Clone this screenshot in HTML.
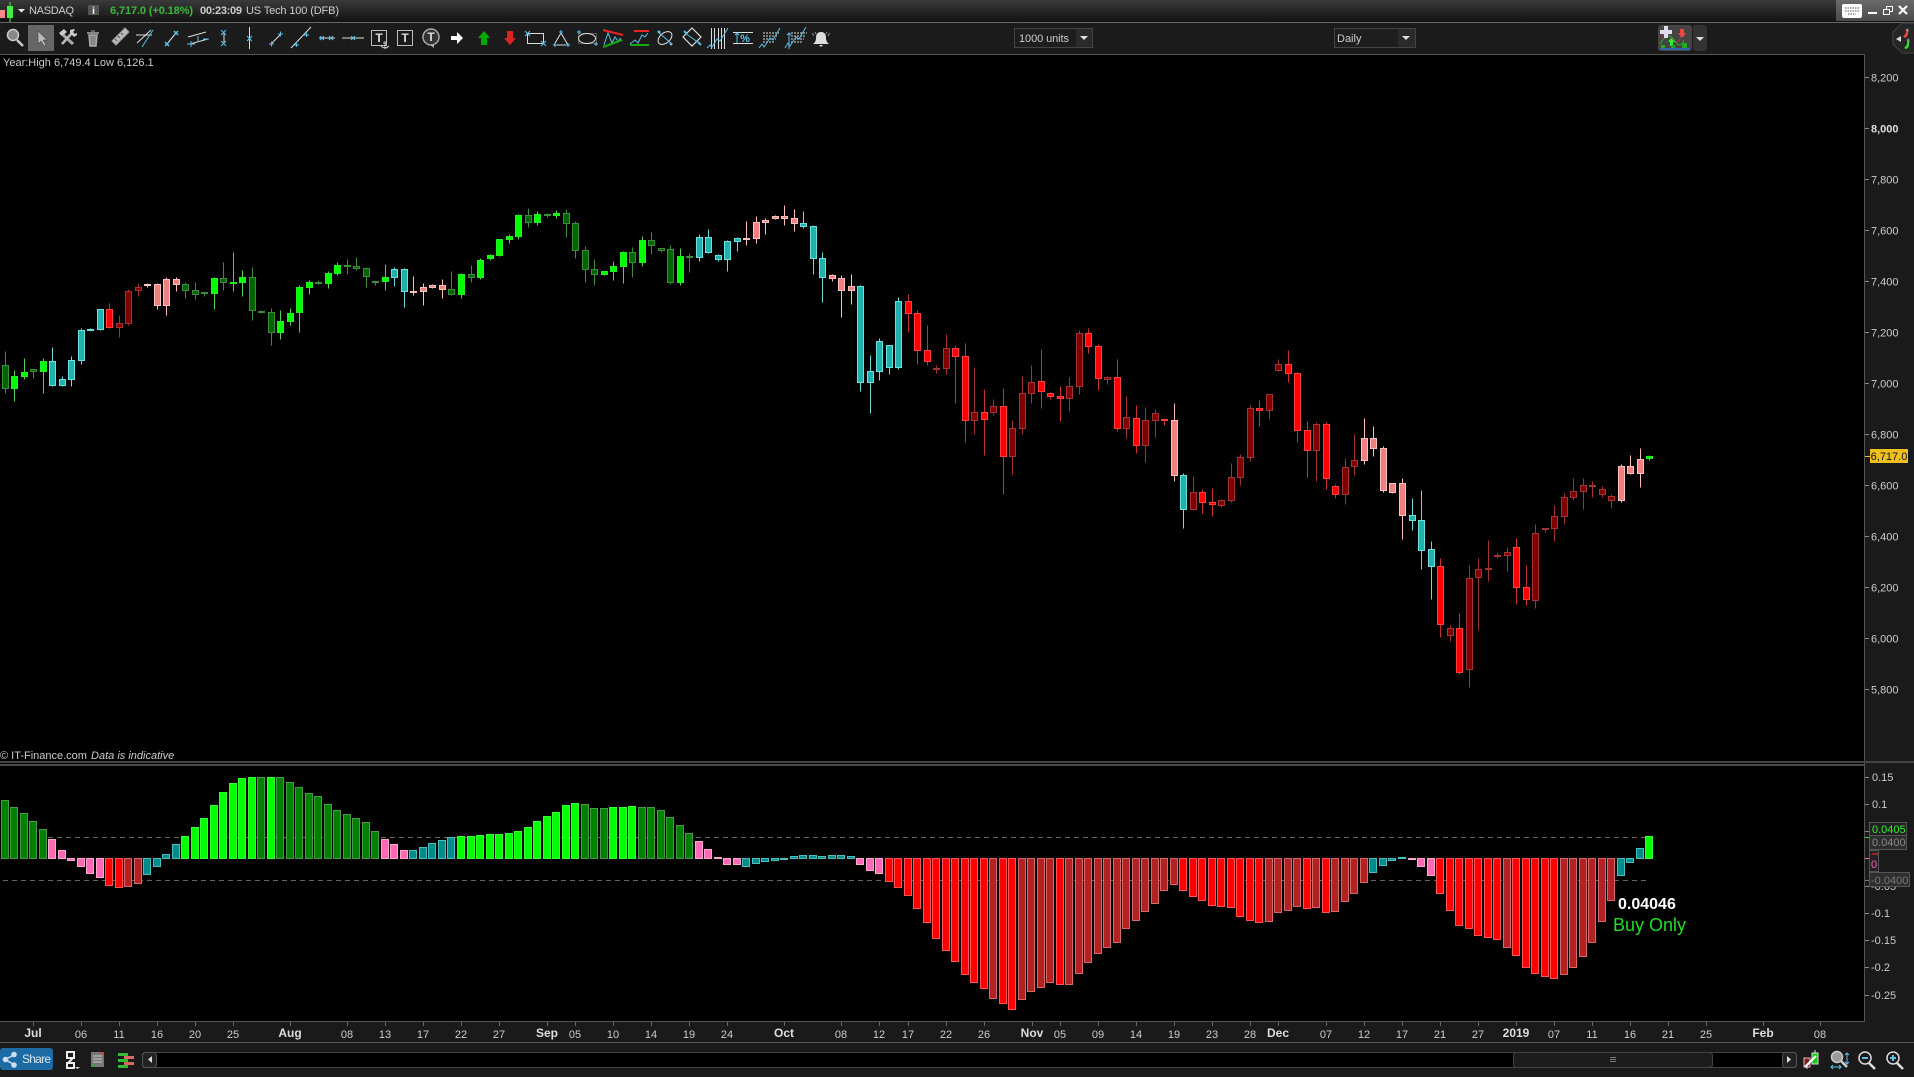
<!DOCTYPE html>
<html><head><meta charset="utf-8"><title>NASDAQ</title>
<style>
html,body{margin:0;padding:0;background:#1a1a1a;width:1914px;height:1077px;overflow:hidden}
svg{display:block;font-family:"Liberation Sans",Arial,sans-serif;font-size:11px}
.a{fill:#ccc}
.m{fill:#ddd;font-weight:bold;font-size:12px;text-anchor:middle}
.d{fill:#ccc;text-anchor:middle}
.w{fill:none;stroke-width:1}
.n{fill:none}
</style></head><body>
<svg width="1914" height="1077" viewBox="0 0 1914 1077" xmlns="http://www.w3.org/2000/svg">
<defs>
<linearGradient id="t" x1="0" y1="0" x2="0" y2="1"><stop offset="0" stop-color="#3a3a3a"/><stop offset="1" stop-color="#121212"/></linearGradient>
<linearGradient id="tr" x1="0" y1="0" x2="0" y2="1"><stop offset="0" stop-color="#6a6a6a"/><stop offset="1" stop-color="#4a4a4a"/></linearGradient>
</defs>
<!-- title bar -->
<rect width="1914" height="22" fill="url(#t)"/>
<rect y="22" width="1914" height="1" fill="#666"/>
<rect y="23" width="1914" height="31" fill="#1b1b1b"/>
<rect y="54" width="1865" height="1" fill="#555"/>
<!-- chart -->
<rect y="55" width="1864" height="966" fill="#000"/>
<rect x="1864" y="54" width="1" height="967" fill="#555"/>
<rect y="1021" width="1865" height="1" fill="#555"/>
<rect y="761" width="1914" height="2" fill="#444"/>
<rect y="764" width="1865" height="2" fill="#4a4a4a"/>

<!-- title left -->
<path d="M0 10h5v8H0z" fill="#f88"/><path d="M7 6h6v12H7z" fill="#4e4"/><path d="M10 2v20" stroke="#4e4"/>
<path d="M18 9h7l-3.500 3.500z" fill="#eee"/>
<text x="29" y="14" class="a" textLength="45">NASDAQ</text>
<rect x="88" y="5" width="11" height="10" fill="#555"/><text x="93.500" y="14" fill="#fff" font-weight="bold" font-size="10" text-anchor="middle">i</text>
<text x="110" y="14" fill="#3cb83c" font-weight="bold" textLength="83">6,717.0 (+0.18%)</text>
<text x="200" y="14" fill="#ccc" font-weight="bold" textLength="42">00:23:09</text>
<text x="246" y="14" class="a" textLength="93">US Tech 100 (DFB)</text>

<!-- top right -->
<rect x="1836" y="0" width="78" height="21" fill="url(#tr)"/>
<rect x="1842" y="4" width="20" height="14" rx="2" fill="#fff"/>
<path d="M1845 8h14M1845 11h14M1848 14h8" stroke="#555" stroke-dasharray="1.500 1"/>
<path d="M1868 13h9" stroke="#fff" stroke-width="2"/>
<path d="M1883.500 9.500h6v5h-6zM1886.500 9V6.500h6v5H1890" stroke="#fff" fill="none"/>
<path d="M1899 6l8 8M1907 6l-8 8" stroke="#fff" stroke-width="2.200"/>

<!-- toolbar icons -->
<g fill="none" stroke="#5bc0e8">
<circle cx="13" cy="35" r="5.500" fill="#888" stroke="#ccc" stroke-width="1.500"/><path d="M17 40l6 6" stroke="#ccc" stroke-width="2.500"/>
<rect x="28" y="25" width="26" height="26" fill="#666" stroke="none"/>
<path d="M38 31v13l3-3 3 5 2-1-3-5h4z" fill="#bbb" stroke="#333" stroke-width=".5"/>
<path d="M61 33l12 11" stroke="#aaa" stroke-width="3"/><path d="M72 33L62 44" stroke="#bbb" stroke-width="2.500"/>
<path d="M59 33l5-4 3 3-5 4zM70 30l4-1 1 1-2 2 2 2 2-1 0 2-3 2-4-4z" fill="#ccc" stroke="none"/>
<path d="M87 33h12M89 35h8l-1 11h-6z" stroke="#aaa" fill="#888" stroke-width="1.500"/><path d="M91 31h4" stroke="#aaa"/>
<path d="M112 41l13-13 4 4-13 13z" fill="#bbb" stroke="#999"/><path d="M115 39l2 2M118 36l2 2M121 33l2 2" stroke="#555"/>
<path d="M137 43l14-13M136 35h16" stroke="#ddd"/><path d="M142 47l11-17"/>
<path d="M167 44l9-11" stroke="#ddd"/><path d="M165 42l4 4M169 42l-4 4M174 31l4 4M178 31l-4 4" stroke-width="1.500"/>
<path d="M188 37l18-5M190 44l18-5" stroke="#ddd"/><path d="M187 44h8M191 41v6M198 36v6M203 39h6"/>
<path d="M224 32v12" stroke="#ddd"/><path d="M221 30l5 5M226 30l-5 5M221 41l5 5M226 41l-5 5"/>
<path d="M249.500 27v22" stroke="#ddd"/><path d="M247 36l5 5M252 36l-5 5"/>
<path d="M271 44l10-10" stroke="#ddd"/><path d="M269 44h5M271.500 41.500v5M278 34h5M280.500 31.500v5"/>
<path d="M291 48l20-21" stroke="#ddd"/><path d="M294 45h5M296.500 42v5M304 35h5M306.500 32v5"/>
<path d="M319 38h16" stroke="#ddd"/><path d="M320 36l4 4M324 36l-4 4M329 36l4 4M333 36l-4 4"/>
<path d="M342 38h22" stroke="#ddd"/><path d="M351 36l4 4M355 36l-4 4"/>
</g>
<rect x="371.500" y="30.500" width="15" height="15" fill="none" stroke="#bbb"/>
<text x="379" y="42" fill="#ddd" font-weight="bold" font-size="12" text-anchor="middle">T</text>
<path d="M385 41v8M381 46q4 4 8 0M383 43h4" stroke="#ccc" fill="none"/>
<rect x="397.500" y="30.500" width="15" height="15" fill="none" stroke="#bbb"/>
<text x="405" y="42" fill="#ddd" font-weight="bold" font-size="12" text-anchor="middle">T</text>
<circle cx="431" cy="37" r="8" fill="#333" stroke="#aaa" stroke-width="1.500"/><path d="M430 45l4 3v-3" fill="#aaa"/>
<text x="431" y="41" fill="#ddd" font-weight="bold" font-size="12" text-anchor="middle">T</text>
<path d="M451 36h6v-4l6 6-6 6v-4h-6z" fill="#fff"/>
<path d="M484 31l6 7h-3v7h-6v-7h-3z" fill="#0a0"/>
<path d="M507 31h6v7h3l-6 7-6-7h3z" fill="#d22"/>
<g fill="none" stroke="#5bc0e8">
<rect x="527.500" y="33.500" width="16" height="10" stroke="#ddd"/><path d="M525 31l5 5M530 31l-5 5M541 41l5 5M546 41l-5 5"/>
<path d="M561 33l7 12h-14z" stroke="#ddd"/><path d="M559 32h4M561 30v4M553 45h4M555 43v4M566 45h4M568 43v4"/>
<rect x="578.500" y="33.500" width="18" height="10" stroke="#555"/><ellipse cx="587" cy="38.500" rx="8.500" ry="5" stroke="#ddd"/><path d="M577 32h4M579 30v4M594 44h4M596 42v4"/>
<path d="M604 45l4-12 4 10 3-6 3 4 3-3"/><path d="M603 30l20 5" stroke="#e22" stroke-width="2"/><path d="M603 47l19-7" stroke="#1a1" stroke-width="2"/>
<path d="M630 44l5-4 3 3 4-8 3 2 3-4"/><path d="M634 31h15" stroke="#e22" stroke-width="2"/><path d="M630 45h19" stroke="#1a1" stroke-width="2"/>
<ellipse cx="665" cy="38" rx="9" ry="5" stroke="#ddd" transform="rotate(-45 665 38)" opacity="0"/>
<ellipse cx="665" cy="38" rx="8" ry="5" stroke="#ddd" transform="rotate(-40 665 38)"/><path d="M658 32l14 12"/><path d="M658 31l2 2M670 43l2 2" stroke-width="2.500"/>
<path d="M683 37l9-9 9 9-9 9z" stroke="#ddd" stroke-width="1.200"/><path d="M685 33l14 10"/><path d="M684 31l3 3M698 42l3 3" stroke-width="2"/>
<path d="M711.500 28v21M714.500 28v21M718.500 28v21M721.500 28v21M724.500 28v21" stroke="#ddd"/><path d="M707 48l3-3 2 2 5-8 3 2 8-13"/>
<path d="M733 32.500h20M733 43.500h20" stroke="#ddd"/><path d="M737 33v10M735 35l2-2 2 2"/><text x="745" y="42" fill="#5bc0e8" stroke="none" font-size="11" font-weight="bold" text-anchor="middle">%</text>
<path d="M763 33h16M763 36h14M763 39h13M763 42h11" stroke="#ddd" stroke-dasharray="2 1"/><path d="M759 48l3-4 2 3 6-9 3 2 7-12"/>
<path d="M791 33h16M791 36h14M791 39h13M791 42h11" stroke="#ddd" stroke-dasharray="2 1"/><path d="M785 48l3-5 2 3 6-9 3 2 7-12M789 33v16M787 35l2-2 2 2"/>
</g>
<path d="M821 32q5 0 5 6 0 4 3 6h-16q3-2 3-6 0-6 5-6zM819 45h4l-2 2z" fill="#ddd"/>
<path d="M812 33l2 3M830 33l-2 3M815 32l1 2M827 32l-1 2" stroke="#888" fill="none"/>

<!-- dropdowns -->
<rect x="1014.500" y="28.500" width="78" height="19" fill="#1e1e1e" stroke="#444"/>
<text x="1019" y="42" class="a" textLength="50">1000 units</text>
<rect x="1076" y="29" width="16" height="18" fill="#2a2a2a"/><path d="M1080 36h8l-4 4z" fill="#ddd"/>
<rect x="1334.500" y="28.500" width="81" height="19" fill="#1e1e1e" stroke="#444"/>
<text x="1337" y="42" class="a">Daily</text>
<rect x="1398" y="29" width="17" height="18" fill="#2a2a2a"/><path d="M1402 36h8l-4 4z" fill="#ddd"/>

<!-- trade button -->
<rect x="1658" y="25" width="34" height="26" rx="3" fill="#444"/>
<rect x="1693" y="25" width="14" height="26" rx="3" fill="#333"/>
<path d="M1696 37h8l-4 4z" fill="#ddd"/>
<path d="M1660 38q6-8 12 0t8 0" stroke="#a33" fill="none"/>
<path d="M1660 44q8-14 14-4t10 0" stroke="#3a3" fill="none"/>
<path d="M1662 33h4v-4h4v4h4v4h-4v4h-4v-4h-4z" fill="#dde" transform="translate(-2 -3)"/>
<path d="M1680 29h4v4h2l-4 5-4-5h2z" fill="#e44"/>
<path d="M1671 38l-3 4h2v4h3v-4h2z" fill="#3e3"/>
<path d="M1660 49h30" stroke="#36a" stroke-width="2"/><path d="M1661 45h4v3h-4zM1671 45h4v3h-4zM1682 43h5v5h-5z" fill="#2a2"/>
<!-- right chevron -->
<path d="M1914 23h-12l-9 9v12l9 9h12" fill="#262626" stroke="#444"/>
<path d="M1901 40l-5-3 5-3z" fill="#ddd" transform="translate(0 2)"/>
<path d="M1903 36q4-2 3-7l2 1q1 6-3 8z" fill="#e44"/><path d="M1904 48q4-3 3-8l2 1q1 7-3 8z" fill="#3d3"/><path d="M1905 30l3-2 1 4zM1906 40l3-2 1 4z" fill="#ccc" opacity=".5"/>

<text x="3" y="66" class="a">Year:High 6,749.4 Low 6,126.1</text>
<text x="0" y="759" fill="#ccc">© IT-Finance.com <tspan font-style="italic" dx="1">Data is indicative</tspan></text>

<!-- price axis -->
<path d="M1865 77.500h4M1865 128.500h4M1865 179.500h4M1865 230.500h4M1865 281.500h4M1865 332.500h4M1865 383.500h4M1865 434.500h4M1865 485.500h4M1865 536.500h4M1865 587.500h4M1865 638.500h4M1865 689.500h4" stroke="#888"/>
<g class="a">
<text x="1871" y="81.500">8,200</text>
<text x="1871" y="132.500" font-weight="bold" fill="#ddd">8,000</text>
<text x="1871" y="183.500">7,800</text>
<text x="1871" y="234.500">7,600</text>
<text x="1871" y="285.500">7,400</text>
<text x="1871" y="336.500">7,200</text>
<text x="1871" y="387.500">7,000</text>
<text x="1871" y="438.500">6,800</text>
<text x="1871" y="489.500">6,600</text>
<text x="1871" y="540.500">6,400</text>
<text x="1871" y="591.500">6,200</text>
<text x="1871" y="642.500">6,000</text>
<text x="1871" y="693.500">5,800</text>
</g>
<rect x="1870" y="449" width="38" height="14" fill="#f0c020"/>
<text x="1889" y="460" fill="#111" text-anchor="middle">6,717.0</text>
<path d="M1865 456.500h5" stroke="#f0c020"/>

<!-- oscillator axis -->
<path d="M1865 777.500h4M1865 804.500h4M1865 831.500h4M1865 886.500h4M1865 913.500h4M1865 940.500h4M1865 967.500h4M1865 995.500h4" stroke="#888"/>
<g class="a">
<text x="1872" y="781">0.15</text>
<text x="1872" y="808">0.1</text>
<text x="1871" y="890">-0.05</text>
<text x="1871" y="917">-0.1</text>
<text x="1871" y="944">-0.15</text>
<text x="1871" y="971">-0.2</text>
<text x="1871" y="999">-0.25</text>
</g>
<path d="M1865 837.500h5" stroke="#3d3"/><path d="M1865 858.500h5" stroke="#f6b"/><path d="M1865 880.500h5" stroke="#777"/>
<rect x="1869.500" y="822.500" width="37" height="13" fill="#222" stroke="#555"/>
<text x="1872" y="833" fill="#3e3" font-size="11">0.0405</text>
<rect x="1869.500" y="835.500" width="37" height="14" fill="#2e2e2e" stroke="#555"/>
<text x="1872" y="846" fill="#888" font-size="11">0.0400</text>
<rect x="1869.500" y="850.500" width="9" height="21" fill="#222" stroke="#555"/>
<path d="M1871 855h7v-2h-5z" fill="#a22"/>
<text x="1871" y="868" fill="#f6b">0</text>
<rect x="1869.500" y="872.500" width="40" height="14" fill="#2e2e2e" stroke="#555"/>
<text x="1871" y="884" fill="#777">-0.0400</text>

<!-- time axis -->
<rect y="1042" width="1914" height="1" fill="#555"/>
<path d="M33.500 1022v4M81.500 1022v4M119.500 1022v4M157.500 1022v4M195.500 1022v4M233.500 1022v4M290.500 1022v4M347.500 1022v4M385.500 1022v4M423.500 1022v4M461.500 1022v4M499.500 1022v4M547.500 1022v4M575.500 1022v4M613.500 1022v4M651.500 1022v4M689.500 1022v4M727.500 1022v4M784.500 1022v4M841.500 1022v4M879.500 1022v4M908.500 1022v4M946.500 1022v4M984.500 1022v4M1032.500 1022v4M1060.500 1022v4M1098.500 1022v4M1136.500 1022v4M1174.500 1022v4M1212.500 1022v4M1250.500 1022v4M1278.500 1022v4M1326.500 1022v4M1364.500 1022v4M1402.500 1022v4M1440.500 1022v4M1478.500 1022v4M1516.500 1022v4M1554.500 1022v4M1592.500 1022v4M1630.500 1022v4M1668.500 1022v4M1706.500 1022v4M1763.500 1022v4M1820.500 1022v4" stroke="#666"/>
<g>
<text x="33" y="1037" class="m">Jul</text><text x="81" y="1038" class="d">06</text><text x="119" y="1038" class="d">11</text><text x="157" y="1038" class="d">16</text><text x="195" y="1038" class="d">20</text><text x="233" y="1038" class="d">25</text><text x="290" y="1037" class="m">Aug</text><text x="347" y="1038" class="d">08</text><text x="385" y="1038" class="d">13</text><text x="423" y="1038" class="d">17</text><text x="461" y="1038" class="d">22</text><text x="499" y="1038" class="d">27</text><text x="547" y="1037" class="m">Sep</text><text x="575" y="1038" class="d">05</text><text x="613" y="1038" class="d">10</text><text x="651" y="1038" class="d">14</text><text x="689" y="1038" class="d">19</text><text x="727" y="1038" class="d">24</text><text x="784" y="1037" class="m">Oct</text><text x="841" y="1038" class="d">08</text><text x="879" y="1038" class="d">12</text><text x="908" y="1038" class="d">17</text><text x="946" y="1038" class="d">22</text><text x="984" y="1038" class="d">26</text><text x="1032" y="1037" class="m">Nov</text><text x="1060" y="1038" class="d">05</text><text x="1098" y="1038" class="d">09</text><text x="1136" y="1038" class="d">14</text><text x="1174" y="1038" class="d">19</text><text x="1212" y="1038" class="d">23</text><text x="1250" y="1038" class="d">28</text><text x="1278" y="1037" class="m">Dec</text><text x="1326" y="1038" class="d">07</text><text x="1364" y="1038" class="d">12</text><text x="1402" y="1038" class="d">17</text><text x="1440" y="1038" class="d">21</text><text x="1478" y="1038" class="d">27</text><text x="1516" y="1037" class="m">2019</text><text x="1554" y="1038" class="d">07</text><text x="1592" y="1038" class="d">11</text><text x="1630" y="1038" class="d">16</text><text x="1668" y="1038" class="d">21</text><text x="1706" y="1038" class="d">25</text><text x="1763" y="1037" class="m">Feb</text><text x="1820" y="1038" class="d">08</text>
</g>

<!-- bottom bar -->
<rect x="0" y="1048" width="53" height="22" rx="3" fill="#1d6ba5"/>
<path d="M14 1055l-9 4.500 9 5" stroke="#cde" stroke-width="1.500" fill="none"/><circle cx="5.500" cy="1059.500" r="2.800" fill="#cde"/><circle cx="14" cy="1054.500" r="2.800" fill="#cde"/><circle cx="14" cy="1065" r="2.800" fill="#cde"/>
<text x="22" y="1063" fill="#d8e4ee" font-size="12" textLength="29">Share</text>
<path d="M67 1052h7v6h-7zM67 1063h7v5h-7zM73 1058l-5 5" stroke="#eee" stroke-width="2" fill="none"/><path d="M75 1067h5l-2.500 2z" fill="#ddd"/>
<rect x="91" y="1052" width="13" height="15" fill="#777"/><path d="M93 1056h9M93 1059h9M93 1062h9" stroke="#ccc"/><path d="M99 1052h5v4z" fill="#c44"/><path d="M91 1067v-4l5 4z" fill="#3a3"/>
<path d="M118 1053h10v3h-10zM118 1059h10v3h-10zM118 1065h10v3h-10z" fill="#3b3"/><path d="M124 1056h10v3h-10zM124 1062h10v3h-10z" fill="#d66"/>
<!-- scrollbar -->
<rect x="142" y="1052" width="1655" height="15" rx="2" fill="#000"/>
<rect x="142.500" y="1052.500" width="1654" height="15" rx="2" fill="none" stroke="#444"/>
<rect x="142.500" y="1052.500" width="14" height="15" rx="3" fill="#222" stroke="#555"/><path d="M152 1056v7l-4-3.500z" fill="#ddd"/>
<rect x="1782.500" y="1052.500" width="14" height="15" rx="3" fill="#222" stroke="#555"/><path d="M1787 1056v7l4-3.500z" fill="#ddd"/>
<rect x="1513.500" y="1052.500" width="199" height="15" rx="3" fill="#1c1c1c" stroke="#444"/>
<path d="M1610 1057.500h6M1610 1059.500h6M1610 1061.500h6" stroke="#777"/>
<!-- bottom right icons -->
<rect x="1804" y="1058" width="6" height="9" fill="#722" stroke="#ebb"/><rect x="1812" y="1053" width="6" height="11" fill="#1c1" stroke="#ddd"/><path d="M1815 1050v3M1807 1066v3" stroke="#ddd"/><path d="M1805 1067l11-11" stroke="#fff" stroke-width="2"/>
<circle cx="1837" cy="1057" r="5.500" fill="#999" stroke="#ccc" stroke-width="1.500"/><path d="M1841 1061l6 6" stroke="#ccc" stroke-width="2.500"/><path d="M1847 1053v11M1845 1055l2-2 2 2M1845 1062l2 2 2-2M1831 1067h10M1833 1065l-2 2 2 2M1839 1065l2 2-2 2" stroke="#5bc0e8" fill="none"/>
<circle cx="1865" cy="1058" r="6" fill="none" stroke="#ddd" stroke-width="1.500"/><path d="M1862 1058h6" stroke="#5bc0e8" stroke-width="2"/><path d="M1869 1063l6 6" stroke="#ddd" stroke-width="2.500"/>
<circle cx="1893" cy="1058" r="6" fill="none" stroke="#ddd" stroke-width="1.500"/><path d="M1890 1058h6M1893 1055v6" stroke="#5bc0e8" stroke-width="2"/><path d="M1897 1063l6 6" stroke="#ddd" stroke-width="2.500"/>

<!-- dashed levels -->
<path d="M3 837.500H1649M3 880.500H1649" stroke="#666" stroke-dasharray="5 4"/>

<!-- oscillator -->
<g transform="translate(.5 .5)">
<path fill="#00ff00" stroke="#33ff33" d="M181 836h7V858h-7zM191 827h7V858h-7zM200 818h7V858h-7zM210 805h7V858h-7zM219 792h7V858h-7zM229 783h7V858h-7zM238 778h7V858h-7zM248 777h7V858h-7zM267 777h7V858h-7zM457 836h7V858h-7zM467 836h7V858h-7zM476 835h7V858h-7zM486 834h7V858h-7zM495 834h7V858h-7zM505 833h7V858h-7zM514 831h7V858h-7zM524 827h7V858h-7zM533 821h7V858h-7zM543 816h7V858h-7zM552 812h7V858h-7zM562 805h7V858h-7zM571 803h7V858h-7zM609 807h7V858h-7zM619 807h7V858h-7zM628 806h7V858h-7zM1645 836h7V858h-7z"/>
<path fill="#008000" stroke="#4a9a4a" d="M1 800h7V858h-7zM10 807h7V858h-7zM20 813h7V858h-7zM29 821h7V858h-7zM39 829h7V858h-7zM257 777h7V858h-7zM276 777h7V858h-7zM286 782h7V858h-7zM295 787h7V858h-7zM305 793h7V858h-7zM314 796h7V858h-7zM324 804h7V858h-7zM333 810h7V858h-7zM343 814h7V858h-7zM352 818h7V858h-7zM362 822h7V858h-7zM371 831h7V858h-7zM581 804h7V858h-7zM590 808h7V858h-7zM600 808h7V858h-7zM638 807h7V858h-7zM647 807h7V858h-7zM657 810h7V858h-7zM666 817h7V858h-7zM676 825h7V858h-7zM685 833h7V858h-7z"/>
<path fill="#ff69b4" stroke="#ffa6d4" d="M48 839h7V858h-7zM58 850h7V858h-7zM381 839h7V858h-7zM390 844h7V858h-7zM400 850h7V858h-7zM695 841h7V858h-7zM704 849h7V858h-7zM714 857h7V858h-7zM67 858h7V860h-7zM77 858h7V866h-7zM86 858h7V873h-7zM96 858h7V877h-7zM723 858h7V864h-7zM733 858h7V864h-7zM856 858h7V864h-7zM866 858h7V870h-7zM875 858h7V873h-7zM1408 858h7V859h-7zM1417 858h7V866h-7zM1427 858h7V875h-7z"/>
<path fill="#008b8b" stroke="#4cc0c0" d="M143 858h7V874h-7zM153 858h7V866h-7zM162 854h7V858h-7zM172 844h7V858h-7zM409 850h7V858h-7zM419 847h7V858h-7zM428 843h7V858h-7zM438 840h7V858h-7zM447 837h7V858h-7zM742 858h7V866h-7zM752 858h7V863h-7zM761 858h7V861h-7zM771 858h7V860h-7zM780 858h7V859h-7zM790 856h7V858h-7zM799 855h7V858h-7zM809 855h7V858h-7zM818 856h7V858h-7zM828 855h7V858h-7zM837 855h7V858h-7zM847 856h7V858h-7zM1369 858h7V872h-7zM1379 858h7V865h-7zM1388 858h7V860h-7zM1398 857h7V858h-7zM1617 858h7V875h-7zM1626 858h7V862h-7zM1636 848h7V858h-7z"/>
<path fill="#ff0000" stroke="#ff5555" d="M105 858h7V885h-7zM115 858h7V887h-7zM885 858h7V881h-7zM894 858h7V887h-7zM904 858h7V895h-7zM913 858h7V908h-7zM923 858h7V922h-7zM932 858h7V938h-7zM942 858h7V950h-7zM951 858h7V961h-7zM961 858h7V974h-7zM970 858h7V982h-7zM980 858h7V988h-7zM999 858h7V1003h-7zM1008 858h7V1009h-7zM1056 858h7V984h-7zM1179 858h7V890h-7zM1189 858h7V896h-7zM1198 858h7V900h-7zM1208 858h7V905h-7zM1217 858h7V906h-7zM1227 858h7V907h-7zM1236 858h7V916h-7zM1246 858h7V920h-7zM1255 858h7V922h-7zM1303 858h7V908h-7zM1322 858h7V912h-7zM1436 858h7V893h-7zM1446 858h7V910h-7zM1455 858h7V925h-7zM1465 858h7V928h-7zM1474 858h7V935h-7zM1484 858h7V937h-7zM1493 858h7V939h-7zM1512 858h7V955h-7zM1522 858h7V967h-7zM1531 858h7V973h-7zM1541 858h7V976h-7zM1550 858h7V978h-7z"/>
<path fill="#b22222" stroke="#d46a6a" d="M124 858h7V886h-7zM134 858h7V883h-7zM989 858h7V998h-7zM1018 858h7V999h-7zM1027 858h7V991h-7zM1037 858h7V987h-7zM1046 858h7V982h-7zM1065 858h7V984h-7zM1075 858h7V973h-7zM1084 858h7V962h-7zM1094 858h7V953h-7zM1103 858h7V947h-7zM1113 858h7V942h-7zM1122 858h7V928h-7zM1132 858h7V920h-7zM1141 858h7V911h-7zM1151 858h7V903h-7zM1160 858h7V890h-7zM1170 858h7V884h-7zM1265 858h7V921h-7zM1274 858h7V912h-7zM1284 858h7V910h-7zM1293 858h7V906h-7zM1312 858h7V907h-7zM1331 858h7V911h-7zM1341 858h7V901h-7zM1350 858h7V893h-7zM1360 858h7V882h-7zM1503 858h7V947h-7zM1560 858h7V974h-7zM1569 858h7V967h-7zM1579 858h7V956h-7zM1588 858h7V942h-7zM1598 858h7V921h-7zM1607 858h7V900h-7z"/>
</g>

<!-- candles -->
<g transform="translate(.5 .5)">
<!-- wicks -->
<path class="w" stroke="#55cf55" d="M14 370V401M24 358V379M43 358V393M214 277V309M233 252V291M242 270V296M280 310V339M290 308V325M299 285V332M309 280V294M328 271V288M337 262V275M385 264V290M461 273V298M480 258V279M490 254V260M499 239V256M509 234V243M518 214V239M537 211V225M556 210V218M604 271V275M613 261V280M623 251V283M642 236V266M680 248V285M1649 455V460"/>
<path class="w" stroke="#3c8c3c" d="M5 351V393M33 369V378M185 282V298M195 282V299M204 292V296M223 262V290M252 267V320M261 310V313M271 308V345M318 280V284M347 259V274M356 257V270M366 267V287M375 280V285M451 271V295M471 265V282M528 208V227M547 213V217M566 209V237M575 221V258M585 246V282M594 259V285M632 247V277M651 232V254M661 248V252M670 245V284M689 253V272"/>
<path class="w" stroke="#6fdcdc" d="M52 347V386M62 376V386M71 356V386M81 328V364M90 328V330M100 309V330M394 267V286M404 268V307M699 234V261M708 229V253M718 254V261M727 240V271M737 237V251M803 211V228M813 225V274M822 252V302M860 285V391M870 355V413M879 338V380M889 345V374M898 297V369M1183 473V528M1412 498V530M1421 490V569M1431 541V599"/>
<path class="w" stroke="#ffbdbd" d="M147 283V287M157 283V309M166 277V315M176 277V291M413 276V295M423 283V305M432 284V288M442 279V298M746 221V245M756 216V243M765 218V234M775 215V219M784 205V225M794 209V231M832 274V281M841 275V317M851 274V304M1174 403V481M1364 418V464M1373 426V456M1383 446V492M1392 483V493M1402 478V539M1621 464V502M1630 455V474M1640 448V487"/>
<path class="w" stroke="#c83030" d="M109 303V328M908 294V332M917 310V364M927 325V365M955 345V403M965 343V442M984 389V455M1003 388V494M1041 349V408M1050 392V399M1060 386V421M1088 328V353M1098 344V390M1117 359V431M1136 405V453M1164 419V425M1202 489V513M1212 488V516M1259 400V426M1288 350V382M1297 372V442M1307 421V477M1326 422V489M1335 484V498M1440 558V637M1459 613V674M1516 538V604M1526 565V605"/>
<path class="w" stroke="#a33434" d="M119 315V337M128 289V325M138 283V296M936 365V373M946 334V374M974 367V434M993 399V415M1012 420V474M1022 376V434M1031 365V403M1069 377V411M1079 330V394M1107 376V384M1126 396V438M1145 407V462M1155 409V437M1193 476V510M1221 499V507M1231 463V502M1240 454V485M1250 405V461M1269 394V419M1278 359V371M1316 422V481M1345 458V504M1354 434V475M1450 625V641M1469 565V687M1478 558V630M1488 540V581M1497 552V558M1507 547V571M1535 524V608M1545 528V532M1554 505V541M1564 493V524M1573 478V500M1583 478V509M1592 481V497M1602 486V497M1611 494V508"/>
<!-- bodies -->
<path fill="#00ff00" stroke="#22ee22" d="M11 376h6V388h-6zM21 372h6V376h-6zM40 361h6V371h-6zM211 278h6V293h-6zM230 282h6V283h-6zM239 277h6V282h-6zM277 321h6V332h-6zM287 313h6V321h-6zM296 287h6V312h-6zM306 282h6V287h-6zM325 273h6V283h-6zM334 265h6V273h-6zM382 277h6V281h-6zM458 274h6V294h-6zM477 260h6V277h-6zM487 255h6V258h-6zM496 239h6V255h-6zM506 236h6V239h-6zM515 215h6V236h-6zM534 214h6V222h-6zM553 213h6V215h-6zM601 271h6V274h-6zM610 266h6V271h-6zM620 252h6V266h-6zM639 240h6V262h-6zM677 256h6V282h-6zM1646 456h6V458h-6z"/>
<path fill="#006400" stroke="#3c8c3c" d="M2 365h6V388h-6zM30 369h6V371h-6zM182 284h6V290h-6zM192 290h6V294h-6zM201 292h6V293h-6zM220 278h6V282h-6zM249 277h6V310h-6zM258 311h6V312h-6zM268 312h6V332h-6zM315 282h6V283h-6zM344 265h6V266h-6zM353 266h6V268h-6zM363 268h6V276h-6zM372 281h6V282h-6zM448 289h6V294h-6zM468 274h6V277h-6zM525 215h6V222h-6zM544 214h6V215h-6zM563 213h6V223h-6zM572 223h6V250h-6zM582 250h6V269h-6zM591 269h6V274h-6zM629 252h6V262h-6zM648 240h6V245h-6zM658 248h6V250h-6zM667 249h6V282h-6zM686 256h6V257h-6z"/>
<path fill="#20b2aa" stroke="#6fe0e0" d="M49 361h6V385h-6zM59 379h6V385h-6zM68 360h6V379h-6zM78 330h6V360h-6zM87 329h6V330h-6zM97 309h6V329h-6zM391 269h6V277h-6zM401 269h6V291h-6zM696 237h6V257h-6zM705 237h6V252h-6zM715 255h6V259h-6zM724 241h6V259h-6zM734 238h6V241h-6zM800 223h6V226h-6zM810 226h6V258h-6zM819 258h6V277h-6zM857 286h6V382h-6zM867 371h6V382h-6zM876 341h6V371h-6zM886 345h6V367h-6zM895 301h6V367h-6zM1180 475h6V509h-6zM1409 515h6V520h-6zM1418 520h6V550h-6zM1428 549h6V566h-6z"/>
<path fill="#f08080" stroke="#ffc0c0" d="M144 284h6V285h-6zM154 284h6V305h-6zM163 279h6V305h-6zM173 279h6V284h-6zM410 291h6V292h-6zM420 287h6V291h-6zM429 285h6V287h-6zM439 285h6V289h-6zM743 238h6V239h-6zM753 222h6V238h-6zM762 220h6V222h-6zM772 216h6V218h-6zM781 216h6V218h-6zM791 218h6V223h-6zM829 275h6V278h-6zM838 278h6V290h-6zM848 286h6V290h-6zM1171 420h6V475h-6zM1361 438h6V460h-6zM1370 438h6V448h-6zM1380 448h6V490h-6zM1389 483h6V492h-6zM1399 483h6V515h-6zM1618 466h6V500h-6zM1627 466h6V473h-6zM1637 459h6V473h-6z"/>
<path fill="#ff0000" stroke="#ff4040" d="M106 309h6V327h-6zM905 301h6V313h-6zM914 313h6V350h-6zM924 350h6V361h-6zM952 348h6V356h-6zM962 356h6V420h-6zM981 412h6V419h-6zM1000 406h6V456h-6zM1038 381h6V391h-6zM1047 393h6V396h-6zM1057 396h6V398h-6zM1085 333h6V346h-6zM1095 346h6V378h-6zM1114 377h6V428h-6zM1133 418h6V445h-6zM1161 419h6V420h-6zM1199 492h6V502h-6zM1209 502h6V504h-6zM1256 408h6V410h-6zM1285 364h6V373h-6zM1294 373h6V430h-6zM1304 430h6V450h-6zM1323 424h6V478h-6zM1332 486h6V494h-6zM1437 566h6V624h-6zM1456 628h6V672h-6zM1513 547h6V587h-6zM1523 587h6V599h-6z"/>
<path fill="#800000" stroke="#a33434" d="M116 323h6V327h-6zM125 291h6V323h-6zM135 287h6V290h-6zM933 368h6V369h-6zM943 348h6V368h-6zM971 412h6V420h-6zM990 406h6V412h-6zM1009 428h6V456h-6zM1019 393h6V428h-6zM1028 382h6V393h-6zM1066 386h6V398h-6zM1076 333h6V386h-6zM1104 377h6V379h-6zM1123 417h6V428h-6zM1142 420h6V445h-6zM1152 413h6V420h-6zM1190 492h6V509h-6zM1218 500h6V505h-6zM1228 477h6V500h-6zM1237 457h6V477h-6zM1247 408h6V457h-6zM1266 394h6V410h-6zM1275 364h6V370h-6zM1313 424h6V450h-6zM1342 467h6V494h-6zM1351 460h6V466h-6zM1447 628h6V635h-6zM1466 578h6V669h-6zM1475 569h6V577h-6zM1485 568h6V569h-6zM1494 555h6V556h-6zM1504 552h6V555h-6zM1532 533h6V600h-6zM1542 528h6V529h-6zM1551 516h6V528h-6zM1561 497h6V516h-6zM1570 491h6V497h-6zM1580 485h6V491h-6zM1589 485h6V486h-6zM1599 489h6V494h-6zM1608 496h6V500h-6z"/>
</g>

<text x="1618" y="909" fill="#fff" font-weight="bold" font-size="16">0.04046</text>
<text x="1613" y="931" fill="#22dd22" font-size="18">Buy Only</text>
</svg>
</body></html>
